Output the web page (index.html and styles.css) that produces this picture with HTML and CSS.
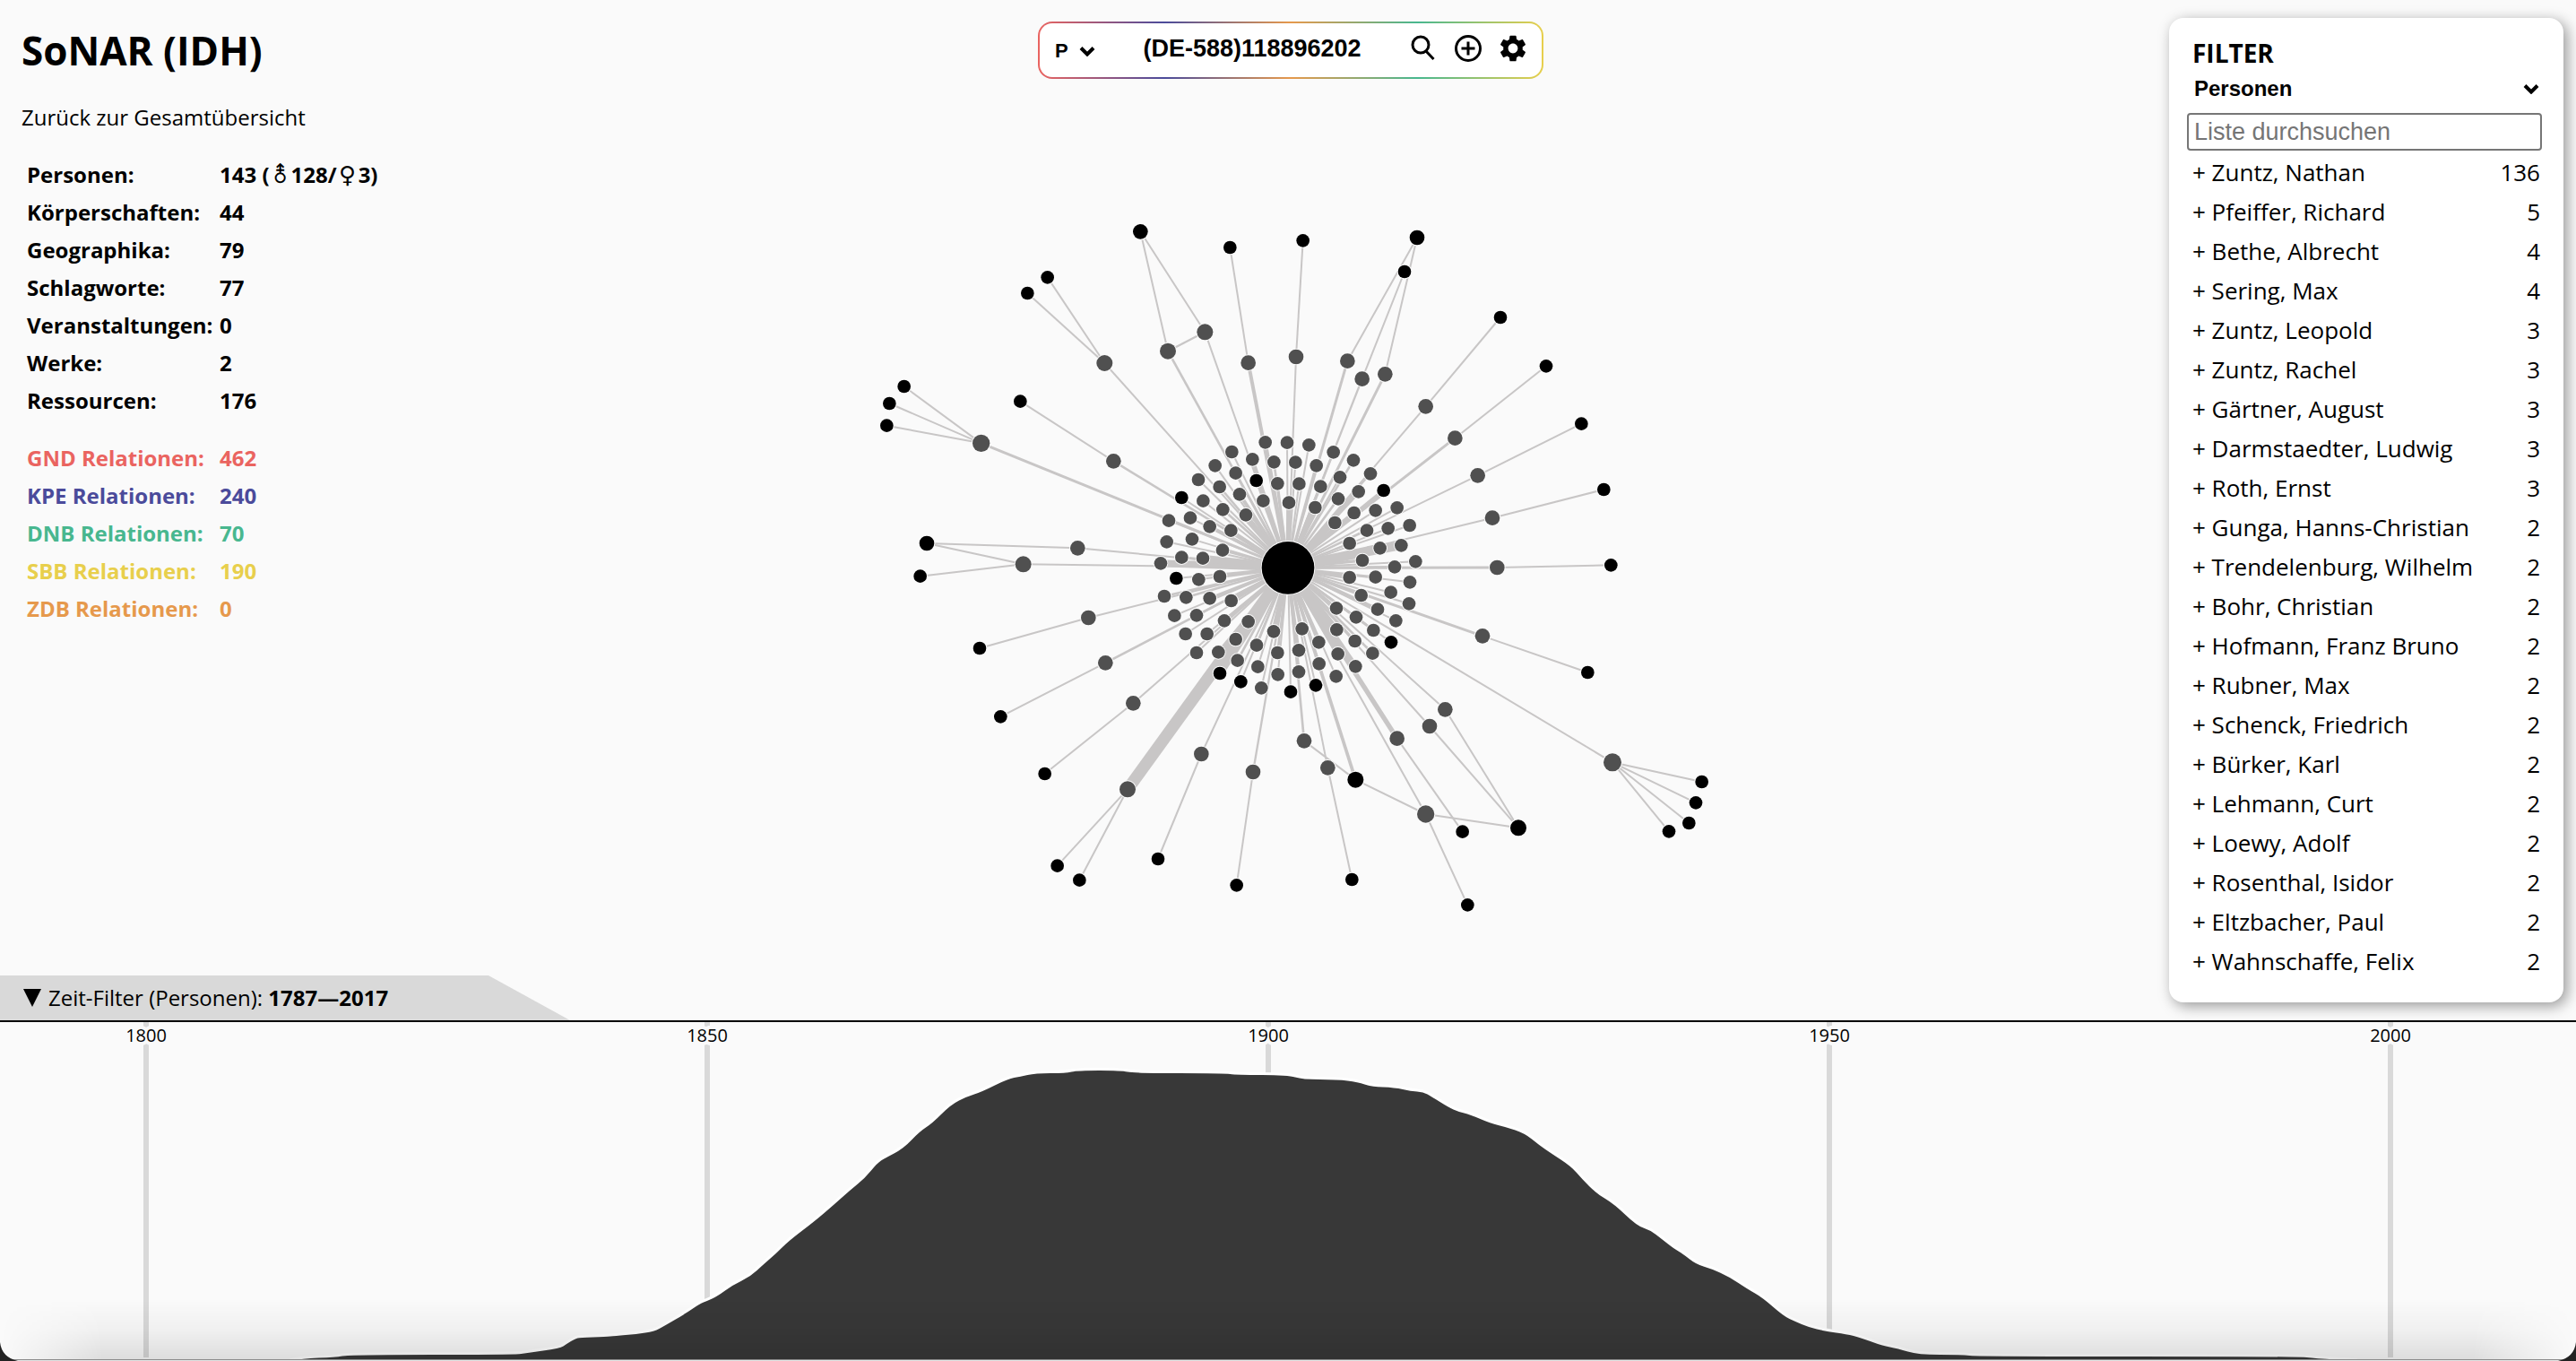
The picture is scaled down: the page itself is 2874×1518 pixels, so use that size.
FILE: index.html
```
<!DOCTYPE html>
<html lang="de">
<head>
<meta charset="utf-8">
<title>SoNAR (IDH)</title>
<link rel="stylesheet" href="styles.css">
</head>
<body>
<main class="stage">
  <svg class="graph" viewBox="0 0 8622 3414" preserveAspectRatio="xMidYMid meet" role="img" aria-label="Netzwerk">
    <g id="links" class="links"></g>
    <g id="nodes" class="nodes"></g>
  </svg>

  <header class="summary">
    <h1 class="title">SoNAR (IDH)</h1>
    <a class="back" href="#">Zurück zur Gesamtübersicht</a>
    <table class="stats">
      <tbody>
        <tr><th scope="row">Personen:</th><td>143 (<span class="sign">⚨</span>128/<span class="sign">♀</span>3)</td></tr>
        <tr><th scope="row">Körperschaften:</th><td>44</td></tr>
        <tr><th scope="row">Geographika:</th><td>79</td></tr>
        <tr><th scope="row">Schlagworte:</th><td>77</td></tr>
        <tr><th scope="row">Veranstaltungen:</th><td>0</td></tr>
        <tr><th scope="row">Werke:</th><td>2</td></tr>
        <tr><th scope="row">Ressourcen:</th><td>176</td></tr>
      </tbody>
    </table>
    <table class="stats">
      <tbody>
        <tr class="gnd"><th scope="row">GND Relationen:</th><td>462</td></tr>
        <tr class="kpe"><th scope="row">KPE Relationen:</th><td>240</td></tr>
        <tr class="dnb"><th scope="row">DNB Relationen:</th><td>70</td></tr>
        <tr class="sbb"><th scope="row">SBB Relationen:</th><td>190</td></tr>
        <tr class="zdb"><th scope="row">ZDB Relationen:</th><td>0</td></tr>
      </tbody>
    </table>
  </header>

  <form class="search">
    <div class="picker">
      <select class="kind" aria-label="Typ"><option>P</option></select>
      <svg class="chevron" viewBox="0 0 18 12"><path d="M2 2.500 9 9.500 16 2.500"/></svg>
    </div>
    <input class="query" type="text" value="(DE-588)118896202" aria-label="Suche">
    <button class="tool" type="submit" aria-label="Suchen">
      <svg viewBox="0 0 32 32"><circle class="line" cx="13" cy="12" r="9"/><path class="line" d="M18.500 18.500 27.500 28"/></svg>
    </button>
    <button class="tool" type="button" aria-label="Hinzufügen">
      <svg viewBox="0 0 32 32"><circle class="line" cx="16" cy="16" r="13.500"/><path class="line" d="M16 8.500v15M8.500 16h15"/></svg>
    </button>
    <button class="tool" type="button" aria-label="Einstellungen">
      <svg viewBox="1.300 1.300 21.400 21.400"><path d="M19.140,12.940c0.040-0.300,0.060-0.610,0.060-0.940c0-0.320-0.020-0.640-0.070-0.940l2.030-1.580c0.180-0.140,0.230-0.410,0.120-0.610l-1.920-3.320c-0.120-0.220-0.370-0.290-0.590-0.220l-2.390,0.960c-0.500-0.380-1.030-0.700-1.620-0.940L14.400,2.810c-0.040-0.240-0.240-0.410-0.480-0.410h-3.840c-0.240,0-0.430,0.170-0.470,0.410L9.250,5.350C8.660,5.590,8.120,5.920,7.630,6.290L5.240,5.330c-0.220-0.080-0.470,0-0.590,0.220L2.740,8.870C2.620,9.080,2.660,9.340,2.860,9.480l2.030,1.580C4.840,11.360,4.800,11.690,4.800,12s0.020,0.640,0.070,0.940l-2.030,1.580c-0.180,0.140-0.230,0.410-0.120,0.610l1.920,3.320c0.120,0.220,0.370,0.290,0.590,0.220l2.390-0.960c0.500,0.380,1.030,0.700,1.620,0.940l0.360,2.540c0.050,0.240,0.240,0.410,0.480,0.410h3.840c0.240,0,0.440-0.170,0.470-0.410l0.360-2.540c0.590-0.240,1.130-0.560,1.620-0.940l2.390,0.960c0.220,0.080,0.470,0,0.590-0.220l1.920-3.320c0.120-0.220,0.070-0.470-0.120-0.610L19.140,12.940z M12,15.600c-1.980,0-3.600-1.620-3.600-3.600s1.620-3.600,3.600-3.600s3.600,1.620,3.600,3.600S13.980,15.600,12,15.600z"/></svg>
    </button>
  </form>

  <aside class="filter">
    <h2 class="filter-title">FILTER</h2>
    <div class="category">
      <select class="category-select" aria-label="Kategorie"><option>Personen</option></select>
      <svg class="chevron" viewBox="0 0 18 12"><path d="M2 2.500 9 9.500 16 2.500"/></svg>
    </div>
    <input class="filter-search" type="text" placeholder="Liste durchsuchen" aria-label="Liste durchsuchen">
    <ul class="people">
      <li><button type="button">+ Zuntz, Nathan</button><span>136</span></li>
      <li><button type="button">+ Pfeiffer, Richard</button><span>5</span></li>
      <li><button type="button">+ Bethe, Albrecht</button><span>4</span></li>
      <li><button type="button">+ Sering, Max</button><span>4</span></li>
      <li><button type="button">+ Zuntz, Leopold</button><span>3</span></li>
      <li><button type="button">+ Zuntz, Rachel</button><span>3</span></li>
      <li><button type="button">+ Gärtner, August</button><span>3</span></li>
      <li><button type="button">+ Darmstaedter, Ludwig</button><span>3</span></li>
      <li><button type="button">+ Roth, Ernst</button><span>3</span></li>
      <li><button type="button">+ Gunga, Hanns-Christian</button><span>2</span></li>
      <li><button type="button">+ Trendelenburg, Wilhelm</button><span>2</span></li>
      <li><button type="button">+ Bohr, Christian</button><span>2</span></li>
      <li><button type="button">+ Hofmann, Franz Bruno</button><span>2</span></li>
      <li><button type="button">+ Rubner, Max</button><span>2</span></li>
      <li><button type="button">+ Schenck, Friedrich</button><span>2</span></li>
      <li><button type="button">+ Bürker, Karl</button><span>2</span></li>
      <li><button type="button">+ Lehmann, Curt</button><span>2</span></li>
      <li><button type="button">+ Loewy, Adolf</button><span>2</span></li>
      <li><button type="button">+ Rosenthal, Isidor</button><span>2</span></li>
      <li><button type="button">+ Eltzbacher, Paul</button><span>2</span></li>
      <li><button type="button">+ Wahnschaffe, Felix</button><span>2</span></li>
    </ul>
  </aside>

  <button class="time-tab" type="button">
    <svg class="triangle" viewBox="0 0 20 20"><path d="M0 0h20L10 20z"/></svg>
    <span>Zeit-Filter (Personen): <b>1787—2017</b></span>
  </button>
</main>

<section class="timeline" aria-label="Zeit-Filter">
  <svg class="chart" viewBox="0 0 2874 378">
    <defs>
      <linearGradient id="shade" x1="0" y1="0" x2="0" y2="1">
        <stop offset="0" stop-color="#000" stop-opacity="0"/>
        <stop offset="0.500" stop-color="#000" stop-opacity="0.040"/>
        <stop offset="1" stop-color="#000" stop-opacity="0.120"/>
      </linearGradient>
      <linearGradient id="sides">
        <stop offset="0" stop-color="#000"/>
        <stop offset="0.040" stop-color="#fff"/>
        <stop offset="0.960" stop-color="#fff"/>
        <stop offset="1" stop-color="#000"/>
      </linearGradient>
      <mask id="fade"><rect width="2874" height="378" fill="url(#sides)"/></mask>
    </defs>
    <g class="ticks">
      <path d="M163 0V374M789 0V374M1415 0V374M2041 0V374M2667 0V374"/>
      <text x="163" y="22">1800</text>
      <text x="789" y="22">1850</text>
      <text x="1415" y="22">1900</text>
      <text x="2041" y="22">1950</text>
      <text x="2667" y="22">2000</text>
    </g>
    <path id="area" class="area"/>
    <rect y="310" width="2874" height="68" fill="url(#shade)" mask="url(#fade)"/>
    <path class="edge" d="M0 376H2874V377H0z"/>
    <path class="edge-light" d="M0 377H2874V378H0z"/>
    <path class="corner" d="M0 357Q2 374 20 378H0zM2874 357Q2872 374 2854 378H2874z"/>
  </svg>
</section>
<script src="graph.js"></script>
</body>
</html>
```
FILE: styles.css
```
* {
  box-sizing: border-box;
}

body {
  margin: 0;
  background: #fafafa;
  color: #000;
  font-family: "Open Sans", "Noto Sans", sans-serif;
  font-size: 24px;
  line-height: 32px;
}

button,
select,
input {
  margin: 0;
  padding: 0;
  border: 0;
  background: none;
  color: inherit;
  font-family: inherit;
  font-size: inherit;
  line-height: inherit;
}

button {
  cursor: pointer;
}

.stage {
  position: relative;
  display: grid;
  grid-template-columns: 1fr 564px 1fr;
  align-items: start;
  padding-left: 6px;
}

.graph {
  position: absolute;
  inset: 0;
  width: 100%;
  height: 100%;
}

.links line {
  stroke: #c8c6c6;
}

.nodes circle {
  fill: #505050;
  stroke: #fafafa;
  stroke-width: 6px;
  paint-order: stroke;
}

.nodes .dark {
  fill: #000;
}

.summary {
  position: relative;
  grid-area: 1 / 1;
  justify-self: start;
  padding: 26px 0 0 18px;
}

.title {
  margin: 0 0 29px;
  font-size: 44px;
  line-height: 60px;
}

.back {
  display: block;
  color: inherit;
  text-decoration: none;
}

.stats {
  margin: 27px 0 0 6px;
  border-collapse: collapse;
  font-weight: 700;
}

.stats + .stats {
  margin-top: 22px;
}

.stats th,
.stats td {
  height: 42px;
  padding: 0;
  text-align: left;
}

.stats th {
  width: 215px;
}

.sign {
  display: inline-block;
  width: 24px;
  font-family: "DejaVu Sans", sans-serif;
  font-size: 26px;
  font-weight: 400;
  text-align: center;
}

.gnd { color: #ea6460; }
.kpe { color: #4b4b9b; }
.dnb { color: #48b78f; }
.sbb { color: #e8cf4c; }
.zdb { color: #e6994c; }

.search {
  position: relative;
  grid-area: 1 / 2;
  display: flex;
  align-items: center;
  height: 64px;
  margin-top: 24px;
  padding: 0 16px 4px;
  border: 2px solid transparent;
  border-radius: 16px;
  background:
    linear-gradient(#fff, #fff) padding-box,
    linear-gradient(90deg, #ea6460, #4b4b9b 25%, #e6994c 50%, #48b78f 75%, #e8cf4c) border-box;
}

.picker,
.category {
  display: flex;
  align-items: center;
}

.picker select,
.category select {
  appearance: none;
  font-family: "Liberation Sans", Arial, sans-serif;
  font-weight: 700;
}

.picker {
  width: 46px;
  padding-top: 6px;
  justify-content: space-between;
}

.kind {
  width: 24px;
  padding-left: 1px;
  font-size: 22px;
}

.chevron {
  flex: none;
  width: 18px;
  height: 12px;
  fill: none;
  stroke: #000;
  stroke-width: 4px;
}

.query {
  flex: 1;
  min-width: 0;
  font-family: "Liberation Sans", Arial, sans-serif;
  font-size: 27px;
  font-weight: 700;
  text-align: center;
}

.tool {
  display: flex;
  margin-left: 18px;
}

.query + .tool {
  margin-left: 0;
}

.tool svg {
  width: 32px;
  height: 32px;
}

.tool .line {
  fill: none;
  stroke: #000;
  stroke-width: 3px;
}

.filter {
  position: relative;
  grid-area: 1 / 3;
  justify-self: end;
  width: 440px;
  margin: 20px 14px 20px 0;
  padding: 20px 24px 24px 20px;
  border-radius: 16px;
  background: #fff;
  box-shadow: 4px 4px 16px rgba(0, 0, 0, 0.4);
}

.filter-title {
  margin: 0;
  padding-left: 6px;
  font-size: 28px;
  line-height: 38px;
}

.category {
  height: 42px;
  padding: 0 3px 0 8px;
}

.category-select {
  flex: 1;
}

.filter-search {
  display: block;
  width: 100%;
  height: 42px;
  margin: 6px 0 2px;
  padding: 0 6px;
  border: 2px solid #767676;
  border-radius: 4px;
  font-family: "Liberation Sans", Arial, sans-serif;
  font-size: 27px;
}

.filter-search::placeholder {
  color: #757575;
}

.people {
  margin: 0;
  padding: 0 2px 0 6px;
  list-style: none;
  font-size: 26px;
  line-height: 44px;
}

.people li {
  display: flex;
  justify-content: space-between;
}

.time-tab {
  position: absolute;
  bottom: 0;
  left: 0;
  display: flex;
  align-items: center;
  gap: 8px;
  width: 636px;
  height: 50px;
  padding-left: 26px;
  background: #d9d9d9;
  clip-path: polygon(0 0, 545px 0, 100% 100%, 0 100%);
}

.triangle {
  width: 20px;
  height: 20px;
}

.timeline {
  border-top: 2px solid #000;
}

.chart {
  display: block;
  width: 100%;
}

.ticks path {
  stroke: #d9d9d9;
  stroke-width: 6px;
}

.ticks text {
  font-size: 20px;
  text-anchor: middle;
  stroke: #fafafa;
  stroke-width: 8px;
  stroke-linejoin: round;
  paint-order: stroke;
}

.area {
  fill: #383838;
  stroke: #fff;
  stroke-width: 6px;
  stroke-linejoin: round;
  paint-order: stroke;
}

.edge {
  fill: #8a8a8a;
}

.edge-light {
  fill: #e4e4e4;
}

.corner {
  fill: #222;
}
```
FILE: graph.js
```
// Network drawing: one hub, an inner ring of nodes, and outer branches.
const hub = { x: 4311, y: 1900, r: 88 };

// Inner ring: x, y, link width, 1 for a dark node.
const ring = {
  origin: [3810, 1380],
  nodes: [
    [425,100,12],[498,101,6],[571,109,6],[313,132,6],[382,157,12],[454,166,8],[526,167,6],[596,178,10],[653,133,8],
    [720,160,8],[257,178,6],[326,203,8],[201,225,6],[272,249,8],[395,228,8,1],[466,238,8],[538,239,6],[610,248,8],
    [675,217,6],[777,205,6],[145,285,6,1],[217,296,6],[283,325,8],[339,274,12],[418,296,10],[504,302,16],[592,318,10],
    [669,289,8],[737,265,14],[821,261,12,1],[102,362,6],[174,353,6],[239,382,12],[310,395,10],[360,343,14],[658,369,14],
    [722,336,14],[794,328,6],[866,319,6],[95,433,6],[180,424,6],[282,461,8],[707,438,6],[765,395,6],[836,388,6],
    [908,378,6],[75,505,24],[145,485,8],[216,488,24],[750,495,10],[809,454,30],[880,445,28],[928,499,6],[858,517,8],
    [127,555,6,1],[202,559,6],[273,549,12],[707,552,14],[794,551,8],[909,568,6],[87,615,8],[160,619,8],[239,622,10],
    [311,630,12],[746,612,8],[845,602,6],[906,640,6],[121,680,6],[195,679,8],[288,697,12],[368,700,20],[663,655,10],
    [729,685,8],[801,659,12],[862,697,6],[158,741,6],[230,741,6],[326,759,24],[396,779,8],[453,733,16],[548,724,8],
    [664,727,18],[725,765,8],[787,729,8],[846,769,6,1],[195,804,6],[268,802,10],[332,830,8],[400,851,6],[466,804,8],
    [537,796,8],[604,769,12],[668,808,16],[784,806,8],[273,873,24,1],[343,901,6,1],[412,922,6],[467,877,6],
    [510,935,6,1],[537,868,10],[594,913,6,1],[605,841,10],[662,883,6],[727,850,18]
  ]
};

// Branches: x, y, radius, width of the link to the hub, dark flag, and the leaves they lead to.
const branches = [
  { origin: [2880, 660], nodes: [
    [1153,451,27,6,0,[[937,115,25]]],
    [1029,515,27,8,0,[[937,115,25]]],
    [1298,554,25,12,0,[[1237,168,22]]],
    [817,555,27,6,0,[[626,268,22],[559,321,22]]],
    [404,823,29,9,0,[[146,633,22],[97,690,22],[88,764,22]]],
    [847,883,25,8,0,[[535,683,22]]],
    [727,1174,25,6,0,[[222,1158,25]]],
    [545,1228,27,6,0,[[222,1158,25],[200,1268,22]]]
  ], cross: [[1153,451,1029,515,7]] },
  { origin: [2880, 1920], nodes: [
    [763,147,25,6,0,[[399,249,22]]],
    [820,298,25,8,0,[[469,478,22]]],
    [913,433,25,6,0,[[617,669,22]]],
    [894,721,27,40,0,[[659,977,22],[733,1025,22]]],
    [1141,603,25,6,0,[[996,954,22]]],
    [1314,663,25,7,0,[[1259,1042,22]]]
  ], cross: [] },
  { origin: [4320, 660], nodes: [
    [18,534,25,6,0,[[41,145,22]]],
    [190,548,25,9,0,[[423,135,25]]],
    [239,608,25,7,0,[[381,249,22]]],
    [316,592,25,9,0,[[423,135,25]]],
    [452,700,25,6,0,[[702,402,22]]],
    [550,806,25,9,0,[[855,565,22]]],
    [626,931,25,6,0,[[973,758,22]]],
    [675,1073,25,6,0,[[1048,978,22]]],
    [691,1239,25,9,0,[[1072,1231,22]]]
  ], cross: [] },
  { origin: [4320, 1920], nodes: [
    [642,208,25,9,0,[[994,330,22]]],
    [1077,631,30,6,0,[[1376,696,22],[1356,766,22],[1333,834,22],[1266,862,22]]],
    [517,454,25,6,0,[[762,850,27]]],
    [465,510,25,6,0,[[762,850,27]]],
    [356,551,25,16,0,[[575,863,22]]],
    [452,804,29,6,0,[[592,1108,22],[762,850,27]]],
    [217,689,27,11,1,[]],
    [45,559,25,8,0,[]],
    [124,649,25,6,0,[[205,1023,22]]]
  ], cross: [[217,689,452,804,6],[45,559,217,689,6]] }
];

const SVG = "http://www.w3.org/2000/svg";
const links = document.getElementById("links");
const nodes = document.getElementById("nodes");

function add(parent, name, attributes) {
  const element = document.createElementNS(SVG, name);
  for (const key in attributes) element.setAttribute(key, attributes[key]);
  parent.appendChild(element);
}

function link(x1, y1, x2, y2, width) {
  add(links, "line", { x1, y1, x2, y2, "stroke-width": width });
}

function node(cx, cy, r, dark) {
  add(nodes, "circle", { cx, cy, r, class: dark ? "dark" : "light" });
}

for (const { origin: [ox, oy], nodes: list, cross } of branches) {
  for (const [x, y, r, width, dark, leaves] of list) {
    link(hub.x, hub.y, ox + x, oy + y, width);
    for (const [lx, ly, lr] of leaves) {
      link(ox + x, oy + y, ox + lx, oy + ly, 6);
      node(ox + lx, oy + ly, lr, true);
    }
    node(ox + x, oy + y, r, dark);
  }
  for (const [x1, y1, x2, y2, width] of cross) {
    link(ox + x1, oy + y1, ox + x2, oy + y2, width);
  }
}

const [rx, ry] = ring.origin;
for (const [x, y, width, dark] of ring.nodes) {
  link(hub.x, hub.y, rx + x, ry + y, width);
  node(rx + x, ry + y, 22, dark);
}
node(hub.x, hub.y, hub.r, true);

// Persons per year: x, y pairs of the curve, drawn with rounded joins.
const curve = [
  [325,378],[337,375],[374,374],[390,371],[576,371],[587,369],[625,364],[632,359],[642,353],[647,352],[676,351],
  [686,350],[710,348],[730,345],[741,339],[765,325],[781,314],[789,311],[800,306],[818,293],[837,284],[852,270],
  [866,258],[880,244],[909,222],[930,204],[949,187],[965,174],[979,157],[987,152],[1008,141],[1026,122],[1040,113],
  [1061,92],[1079,83],[1095,78],[1125,63],[1138,61],[1155,57],[1189,57],[1202,54],[1251,54],[1265,57],[1366,57],
  [1379,59],[1437,59],[1453,64],[1492,64],[1515,67],[1530,72],[1556,73],[1574,77],[1588,78],[1597,83],[1616,95],
  [1627,100],[1640,103],[1663,113],[1680,117],[1701,124],[1717,137],[1730,146],[1753,161],[1765,175],[1781,191],
  [1801,203],[1826,227],[1841,232],[1854,242],[1868,253],[1877,258],[1892,270],[1909,275],[1929,284],[1950,298],
  [1966,307],[1990,328],[2003,334],[2017,340],[2037,345],[2060,348],[2076,352],[2100,361],[2117,364],[2140,371],
  [2188,371],[2207,373],[2564,373],[2583,375],[2628,378]
];

let path = `M${curve[0]}`;
for (let i = 1; i < curve.length - 1; i++) {
  const [x, y] = curve[i];
  const [nx, ny] = curve[i + 1];
  path += `Q${x} ${y} ${(x + nx) / 2} ${(y + ny) / 2}`;
}
path += `L${curve[curve.length - 1]}z`;
document.getElementById("area").setAttribute("d", path);
```
